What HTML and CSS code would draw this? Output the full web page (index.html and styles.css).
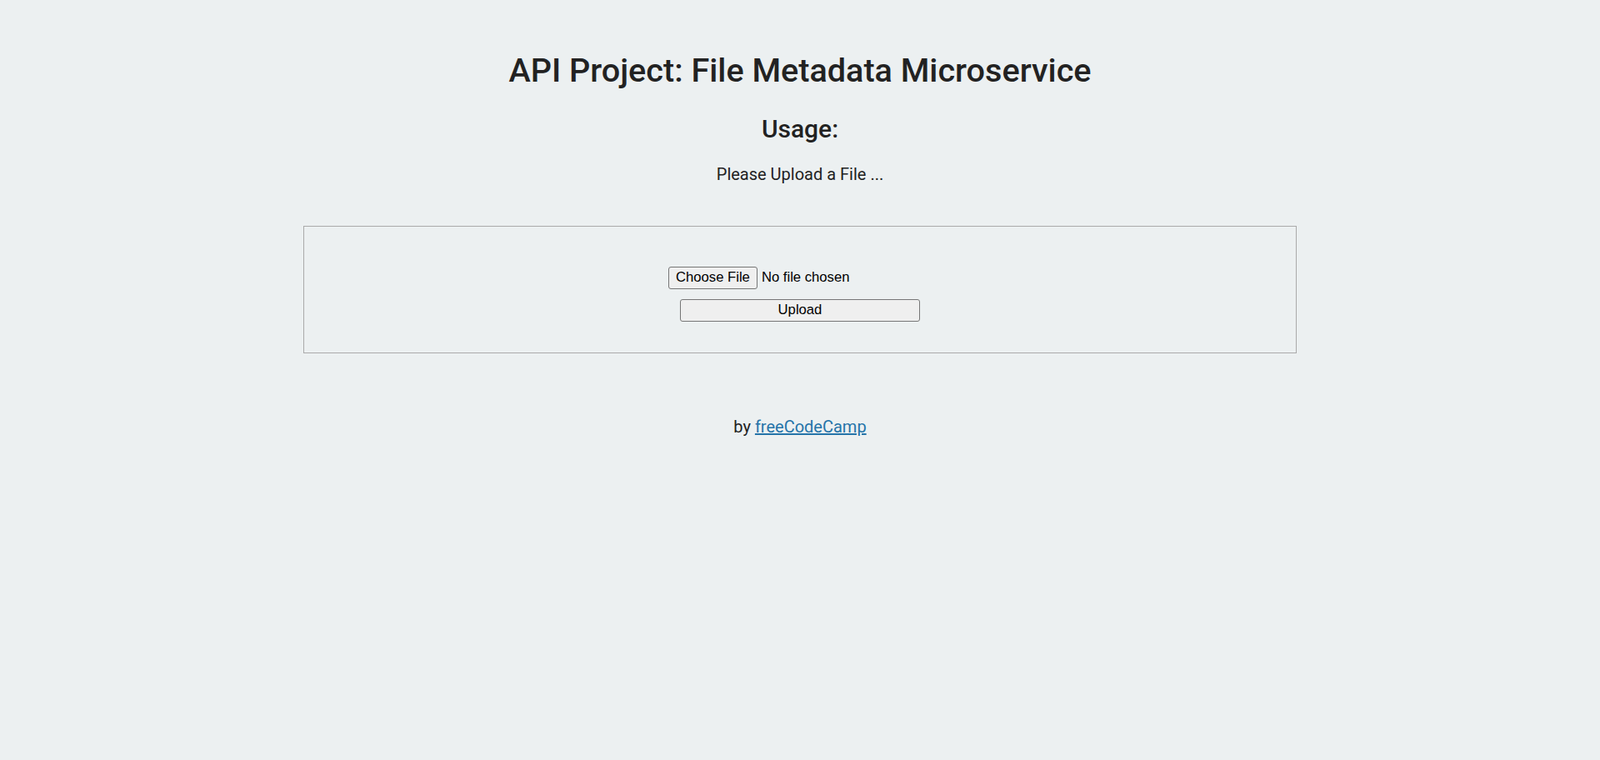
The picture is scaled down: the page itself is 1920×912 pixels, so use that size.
FILE: index.html
```html
<!DOCTYPE html>
<html lang="en">
<head>
<meta charset="utf-8">
<title>File Metadata Microservice</title>
<link rel="stylesheet" href="styles.css">
</head>
<body>
  <div class="container">
    <h1 class="title">API Project: File Metadata Microservice</h1>
    <h2 class="subtitle">Usage:</h2>
    <p class="lead">Please Upload a File ...</p>
    <div class="view">
      <form class="upload-form" enctype="multipart/form-data" method="POST" action="#">
        <input class="file-field" type="file" name="upfile">
        <input class="submit-btn" type="submit" value="Upload">
      </form>
    </div>
    <p class="footer">by <a class="footer-link" href="#">freeCodeCamp</a></p>
  </div>
</body>
</html>
```
FILE: styles.css
```css
html, body {
  margin: 0;
  padding: 0;
}
body {
  font-family: Roboto, "Liberation Sans", sans-serif;
  font-size: 20px;
  color: #222;
  background-color: #ECF0F1;
  text-align: center;
}
.container {
  display: flex;
  flex-direction: column;
  align-items: center;
}
.title {
  margin: 61px 0 0;
  font-size: 39.6px;
  line-height: 47px;
  font-weight: 500;
}
.subtitle {
  margin: 29px 0 0;
  font-size: 30px;
  line-height: 35px;
  font-weight: 500;
}
.lead {
  margin: 26px 0 0;
  font-size: 20px;
  line-height: 23px;
}
.view {
  box-sizing: border-box;
  width: 1192px;
  margin-top: 50px;
  border: 1px solid #aaa;
  padding: 48px 0 37px;
}
.upload-form {
  display: flex;
  flex-direction: column;
  align-items: center;
  gap: 12px;
}
.file-field {
  display: block;
  width: 316px;
  height: 27px;
  margin: 0;
  padding: 0;
  font-family: "Liberation Sans", Arial, sans-serif;
  font-size: 16.67px;
  line-height: 25px;
  color: #000;
  text-align: left;
}
.file-field::file-selector-button {
  height: 27px;
  margin: 0 5px 0 0;
  padding: 0 8px 1px;
  font-family: "Liberation Sans", Arial, sans-serif;
  font-size: 16.67px;
  color: #000;
  background: #efefef;
  border: 1px solid #767676;
  border-radius: 3px;
}
.submit-btn {
  display: block;
  box-sizing: border-box;
  width: 288px;
  height: 27px;
  margin: 0;
  padding: 0 0 1px;
  font-family: "Liberation Sans", Arial, sans-serif;
  font-size: 16.67px;
  color: #000;
  background: #efefef;
  border: 1px solid #767676;
  border-radius: 3px;
}
.footer {
  margin: 77px 0 0;
  font-size: 20px;
  line-height: 23px;
}
.footer-link {
  color: #2574A9;
}
```
